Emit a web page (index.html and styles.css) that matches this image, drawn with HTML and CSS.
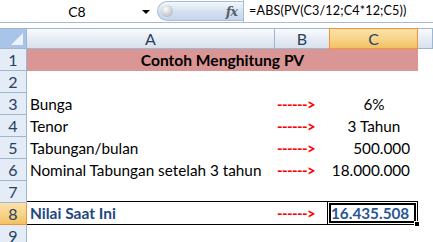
FILE: index.html
```html
<html>

<head>
	<title>Contoh Menghitung PV</title>
	<link rel="stylesheet" href="styles.css">
</head>

<body>
	<div class="formula-bar">
		<div class="name-box">
			<span class="cell-name">C8</span>
			<span class="caret"></span>
		</div>
		<div class="fx-pill">
			<span class="knob"></span>
			<span class="fx">fx</span>
		</div>
		<div class="formula">=ABS(PV(C3/12;C4*12;C5))</div>
	</div>

	<div class="sheet">
		<div class="corner"><span class="tri"></span></div>
		<div class="col-head">A</div>
		<div class="col-head">B</div>
		<div class="col-head active">C</div>
		<div class="col-head"></div>

		<div class="row-head">1</div>
		<div class="title">Contoh Menghitung PV</div>
		<div></div>

		<div class="row-head">2</div>
		<div></div><div></div><div></div><div></div>

		<div class="row-head">3</div>
		<div class="label">Bunga</div>
		<div class="arrow">------&gt;</div>
		<div class="value center">6%</div>
		<div></div>

		<div class="row-head">4</div>
		<div class="label">Tenor</div>
		<div class="arrow">------&gt;</div>
		<div class="value center">3 Tahun</div>
		<div></div>

		<div class="row-head">5</div>
		<div class="label">Tabungan/bulan</div>
		<div class="arrow">------&gt;</div>
		<div class="value">500.000</div>
		<div></div>

		<div class="row-head">6</div>
		<div class="label">Nominal Tabungan setelah 3 tahun</div>
		<div class="arrow">------&gt;</div>
		<div class="value">18.000.000</div>
		<div></div>

		<div class="row-head">7</div>
		<div></div><div></div><div></div><div></div>

		<div class="row-head active">8</div>
		<div class="label result boxed">Nilai Saat Ini</div>
		<div class="arrow boxed">------&gt;</div>
		<div class="selected">
			<div class="inner">16.435.508</div>
			<span class="handle"></span>
		</div>
		<div></div>

		<div class="row-head">9</div>
		<div></div><div></div><div></div><div></div>
	</div>
</body>

</html>
```

FILE: styles.css
```css
* {
	box-sizing: border-box;
}

body {
	margin: 0;
	background: white;
	font-family: Lato, "Open Sans", sans-serif;
	font-size: 16px;
	overflow: hidden;
}

/* formula bar */
.formula-bar {
	display: flex;
	height: 23px;
	border-bottom: 1px solid #a7bad2;
	font-size: 14px;
}

.name-box {
	width: 156px;
	display: flex;
	align-items: center;
	padding-right: 6px;
}

.cell-name {
	flex: 1;
	text-align: center;
	padding-left: 12px;
}

.caret {
	border-left: 4px solid transparent;
	border-right: 4px solid transparent;
	border-top: 4px solid black;
	margin-top: 2px;
}

.fx-pill {
	width: 86px;
	margin: 1px 0 1px 1px;
	border: 1px solid #a9bdd6;
	border-right: none;
	border-radius: 10px 0 0 10px;
	background: linear-gradient(#f4f7fb, #d3e0f0 55%, #c5d6ec);
	display: flex;
	align-items: center;
	justify-content: space-between;
	padding: 0 6px 0 3px;
}

.knob {
	width: 12px;
	height: 12px;
	border-radius: 50%;
	background: radial-gradient(circle at 40% 35%, #fdfdfd, #bcc3cc 70%, #9aa3ae);
}

.fx {
	font-family: "DejaVu Serif", serif;
	font-style: italic;
	font-weight: bold;
	font-size: 13px;
	color: #5a5f66;
	letter-spacing: -1px;
}

.formula {
	flex: 1;
	border-left: 1px solid #a9bdd6;
	padding-left: 5px;
	line-height: 22px;
	font-size: 12.6px;
	letter-spacing: 0.15px;
}

/* sheet grid */
.sheet {
	margin-top: 5px;
	display: grid;
	grid-template-columns: 27px 248px 55px 88px 1fr;
	grid-template-rows: 21px repeat(9, 22px);
}

.corner,
.col-head {
	border-top: 1px solid #9eb6ce;
	border-bottom: 1px solid #9eb6ce;
	border-right: 1px solid #9eb6ce;
}

.corner {
	background: #a9c4e9;
	position: relative;
}

.tri {
	position: absolute;
	right: 3px;
	bottom: 3px;
	border-left: 12px solid transparent;
	border-bottom: 12px solid #eef3fa;
}

.col-head {
	background: linear-gradient(#f9fbfd, #e4eaf3 60%, #d8e1ec);
	color: #27415f;
	text-align: center;
	line-height: 19px;
}

.col-head.active {
	background: linear-gradient(#fbe0a8, #f8d58c 50%, #f2c062);
	border: 1px solid #f29536;
	margin-left: -1px;
}

.col-head:last-child {
	border-right: none;
}

.row-head {
	background: #e4ecf7;
	border-right: 1px solid #9eb6ce;
	border-bottom: 1px solid #9eb6ce;
	color: #27415f;
	text-align: center;
	line-height: 21px;
}

.row-head.active {
	background: linear-gradient(#fbe0a8, #f8d58c 50%, #f2c062);
	border-right: 1px solid #f29536;
	border-bottom: 1px solid #f29536;
}

.title {
	grid-column: span 3;
	background: #da9694;
	font-weight: bold;
	font-size: 15.6px;
	text-align: center;
	line-height: 22px;
}

.label {
	padding-left: 3px;
	line-height: 22px;
	white-space: nowrap;
	font-size: 15.3px;
}

.arrow {
	color: #ff0000;
	font-weight: bold;
	font-size: 15px;
	padding-left: 2px;
	line-height: 22px;
	letter-spacing: -0.6px;
}

.value {
	text-align: right;
	padding-right: 8px;
	line-height: 22px;
	font-size: 15.3px;
}

.value.center {
	text-align: center;
	padding-right: 0;
}

.boxed {
	border-top: 1px solid black;
	border-bottom: 1px solid black;
	margin-top: -2px;
	height: 24px;
}

.result {
	color: #1f477f;
	font-weight: bold;
	font-size: 15.5px;
}

.selected {
	position: relative;
	margin: -2px 0 0 -3px;
	height: 24px;
	border: 1px solid black;
	padding: 1px;
}

.inner {
	height: 100%;
	border: 2px solid black;
	color: #2a5794;
	font-weight: bold;
	font-size: 15.3px;
	text-align: right;
	padding-right: 6px;
	line-height: 16px;
}

.handle {
	position: absolute;
	right: -3px;
	bottom: -3px;
	width: 6px;
	height: 6px;
	background: black;
	border: 1px solid white;
}
```
